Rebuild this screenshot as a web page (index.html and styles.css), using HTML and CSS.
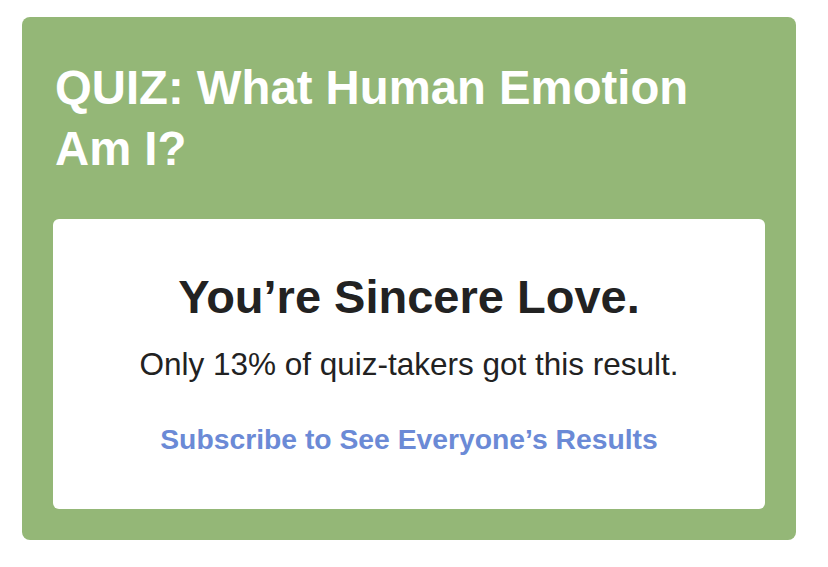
FILE: index.html
```html
<!DOCTYPE html>
<html lang="en">
<head>
    <meta charset="UTF-8">
    <meta name="viewport" content="width=device-width, initial-scale=1.0">
    <title>Quiz Result</title>
    <link rel="stylesheet" href="styles.css">
</head>
<body>
    <div class="quiz-card">
        <h1 class="quiz-title">QUIZ: What Human Emotion Am I?</h1>

        <div class="result-box">
            <h2 class="result-heading">You’re Sincere Love.</h2>
            <p class="result-stat">Only 13% of quiz-takers got this result.</p>
            <a class="result-link" href="#">Subscribe to See Everyone’s Results</a>
        </div>
    </div>
</body>
</html>
```

FILE: styles.css
```css
body {
    margin: 0;
    padding: 17px 0 0 22px;
    font-family: "Liberation Sans", Arial, Helvetica, sans-serif;
    background: #fff;
}
.quiz-card {
    width: 774px;
    box-sizing: border-box;
    padding: 40px 31px 31px 31px;
    background-color: #94b777;
    border-radius: 8px;
}
.quiz-title {
    margin: 0 0 40px 2px;
    font-size: 47.3px;
    line-height: 61px;
    font-weight: bold;
    color: #fff;
}
.result-box {
    display: flex;
    flex-direction: column;
    align-items: center;
    padding: 50px 20px 52px;
    background-color: #fff;
    border-radius: 6px;
    text-align: center;
}
.result-heading {
    margin: 0;
    font-size: 47px;
    line-height: 56px;
    font-weight: bold;
    color: #222;
}
.result-stat {
    margin: 19px 0 0;
    font-size: 31.5px;
    line-height: 40px;
    color: #222;
}
.result-link {
    margin-top: 37px;
    font-size: 28.3px;
    line-height: 36px;
    font-weight: bold;
    color: #6b8ad6;
    text-decoration: none;
}
```
